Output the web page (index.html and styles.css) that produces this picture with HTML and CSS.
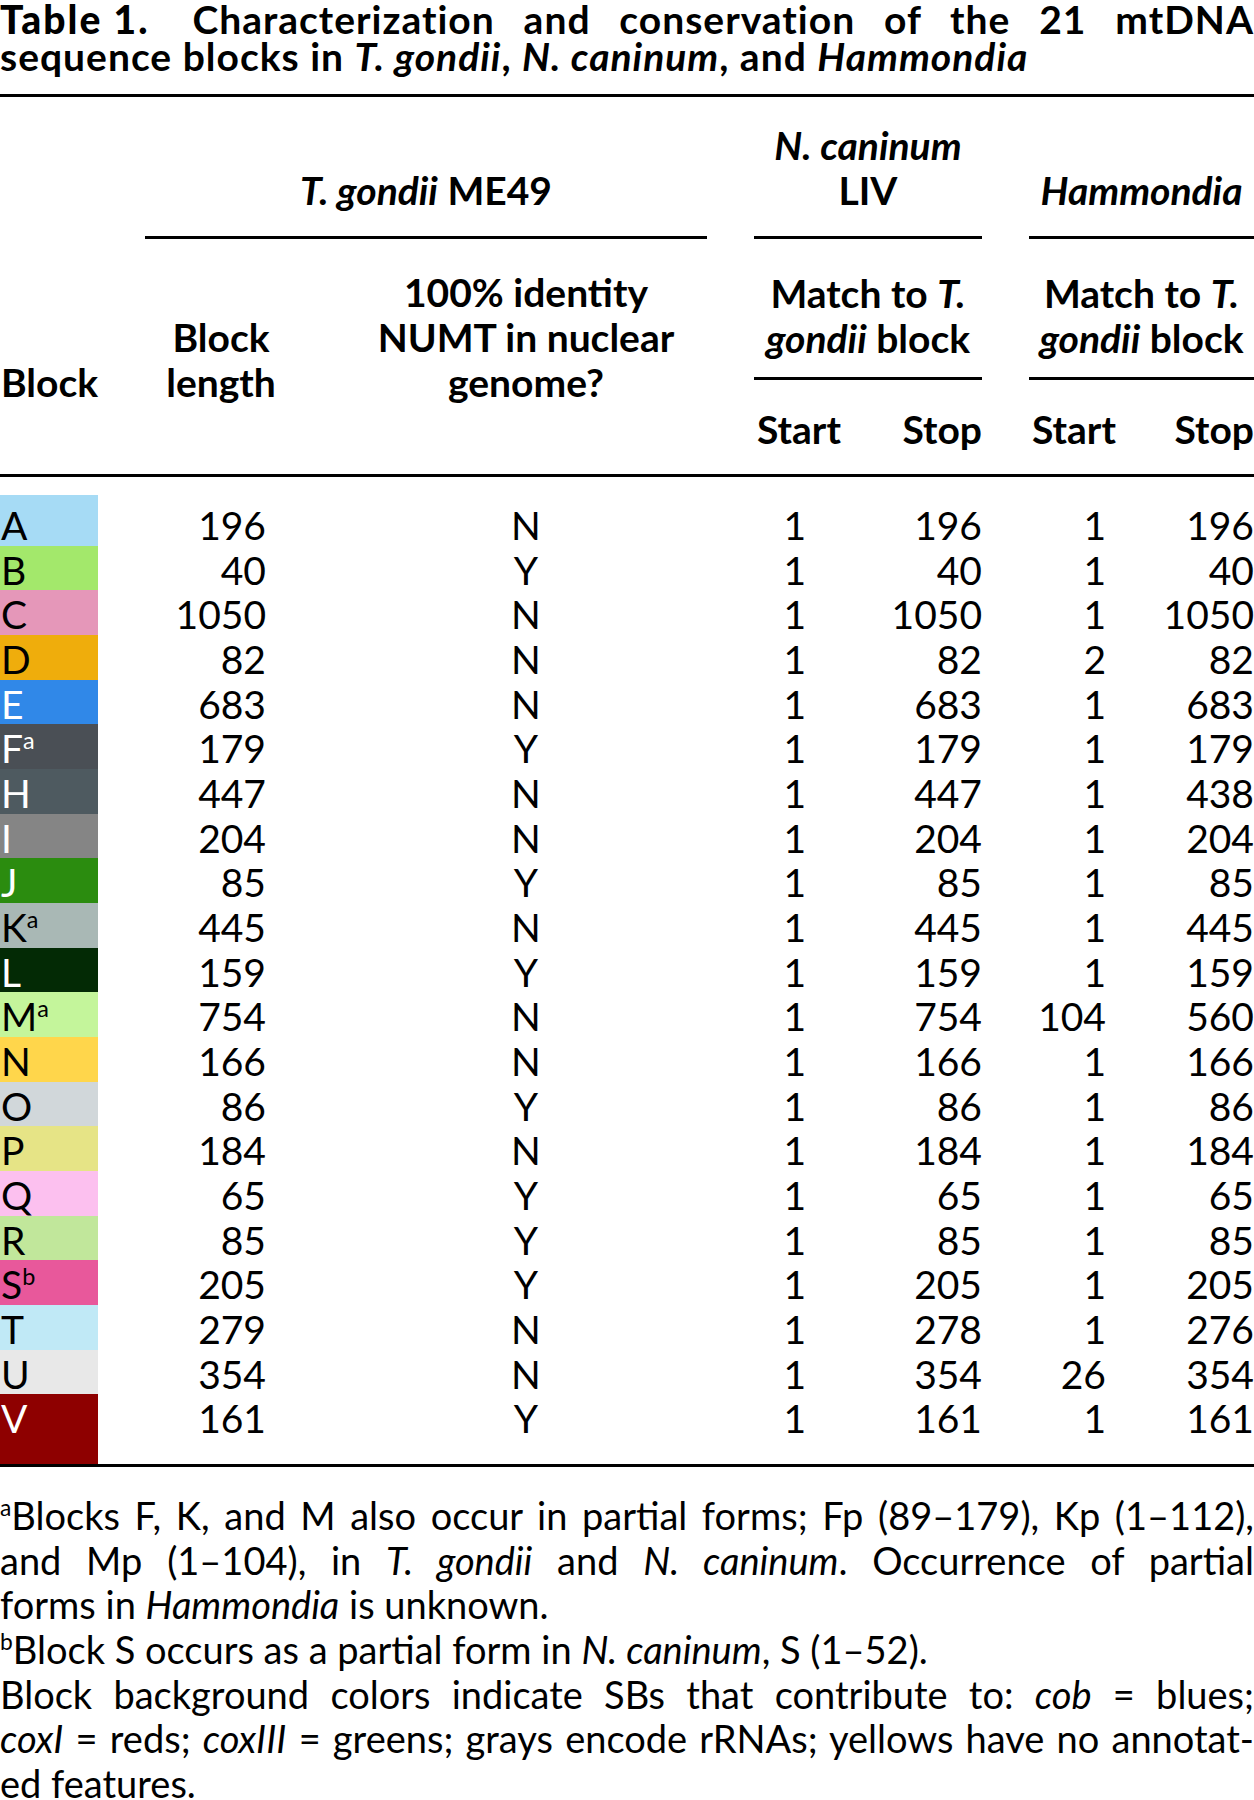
FILE: index.html
```html
<!DOCTYPE html>
<html lang="en">
<head>
<meta charset="utf-8">
<title>Table 1</title>
<link rel="stylesheet" href="styles.css">
</head>
<body>
<div class="page">
  <h1 class="title">
    <span class="t-line t-just"><span class="t-label">Table 1.</span> Characterization and conservation of the 21 mtDNA</span>
    <span class="t-line">sequence blocks in <i>T. gondii</i>, <i>N. caninum</i>, and <i>Hammondia</i></span>
  </h1>

  <div class="thead">
    <div class="grp g-tg"><i>T. gondii</i> ME49</div>
    <div class="grp g-nc"><i>N. caninum</i><br>LIV</div>
    <div class="grp g-hm"><i>Hammondia</i></div>

    <div class="hspan h-block">Block</div>
    <div class="hspan h-len">Block<br>length</div>
    <div class="hspan h-numt">100% identity<br>NUMT in nuclear<br>genome?</div>

    <div class="match m-nc">Match to <i>T.</i><br><i>gondii</i> block</div>
    <div class="match m-hm">Match to <i>T.</i><br><i>gondii</i> block</div>

    <div class="ss ss-l c5">Start</div>
    <div class="ss ss-r c6">Stop</div>
    <div class="ss ss-l c8">Start</div>
    <div class="ss ss-r c9">Stop</div>
  </div>

  <div class="tbody">
    <div class="row"><span class="blk bg-a">A</span><span class="len">196</span><span class="numt">N</span><span class="nstart">1</span><span class="nstop">196</span><span class="hstart">1</span><span class="hstop">196</span></div>
    <div class="row"><span class="blk bg-b">B</span><span class="len">40</span><span class="numt">Y</span><span class="nstart">1</span><span class="nstop">40</span><span class="hstart">1</span><span class="hstop">40</span></div>
    <div class="row"><span class="blk bg-c">C</span><span class="len">1050</span><span class="numt">N</span><span class="nstart">1</span><span class="nstop">1050</span><span class="hstart">1</span><span class="hstop">1050</span></div>
    <div class="row"><span class="blk bg-d">D</span><span class="len">82</span><span class="numt">N</span><span class="nstart">1</span><span class="nstop">82</span><span class="hstart">2</span><span class="hstop">82</span></div>
    <div class="row"><span class="blk bg-e light">E</span><span class="len">683</span><span class="numt">N</span><span class="nstart">1</span><span class="nstop">683</span><span class="hstart">1</span><span class="hstop">683</span></div>
    <div class="row"><span class="blk bg-f light">F<span class="sup">a</span></span><span class="len">179</span><span class="numt">Y</span><span class="nstart">1</span><span class="nstop">179</span><span class="hstart">1</span><span class="hstop">179</span></div>
    <div class="row"><span class="blk bg-h light">H</span><span class="len">447</span><span class="numt">N</span><span class="nstart">1</span><span class="nstop">447</span><span class="hstart">1</span><span class="hstop">438</span></div>
    <div class="row"><span class="blk bg-i light">I</span><span class="len">204</span><span class="numt">N</span><span class="nstart">1</span><span class="nstop">204</span><span class="hstart">1</span><span class="hstop">204</span></div>
    <div class="row"><span class="blk bg-j light">J</span><span class="len">85</span><span class="numt">Y</span><span class="nstart">1</span><span class="nstop">85</span><span class="hstart">1</span><span class="hstop">85</span></div>
    <div class="row"><span class="blk bg-k">K<span class="sup">a</span></span><span class="len">445</span><span class="numt">N</span><span class="nstart">1</span><span class="nstop">445</span><span class="hstart">1</span><span class="hstop">445</span></div>
    <div class="row"><span class="blk bg-l light">L</span><span class="len">159</span><span class="numt">Y</span><span class="nstart">1</span><span class="nstop">159</span><span class="hstart">1</span><span class="hstop">159</span></div>
    <div class="row"><span class="blk bg-m">M<span class="sup">a</span></span><span class="len">754</span><span class="numt">N</span><span class="nstart">1</span><span class="nstop">754</span><span class="hstart">104</span><span class="hstop">560</span></div>
    <div class="row"><span class="blk bg-n">N</span><span class="len">166</span><span class="numt">N</span><span class="nstart">1</span><span class="nstop">166</span><span class="hstart">1</span><span class="hstop">166</span></div>
    <div class="row"><span class="blk bg-o">O</span><span class="len">86</span><span class="numt">Y</span><span class="nstart">1</span><span class="nstop">86</span><span class="hstart">1</span><span class="hstop">86</span></div>
    <div class="row"><span class="blk bg-p">P</span><span class="len">184</span><span class="numt">N</span><span class="nstart">1</span><span class="nstop">184</span><span class="hstart">1</span><span class="hstop">184</span></div>
    <div class="row"><span class="blk bg-q">Q</span><span class="len">65</span><span class="numt">Y</span><span class="nstart">1</span><span class="nstop">65</span><span class="hstart">1</span><span class="hstop">65</span></div>
    <div class="row"><span class="blk bg-r">R</span><span class="len">85</span><span class="numt">Y</span><span class="nstart">1</span><span class="nstop">85</span><span class="hstart">1</span><span class="hstop">85</span></div>
    <div class="row"><span class="blk bg-s">S<span class="sup">b</span></span><span class="len">205</span><span class="numt">Y</span><span class="nstart">1</span><span class="nstop">205</span><span class="hstart">1</span><span class="hstop">205</span></div>
    <div class="row"><span class="blk bg-t">T</span><span class="len">279</span><span class="numt">N</span><span class="nstart">1</span><span class="nstop">278</span><span class="hstart">1</span><span class="hstop">276</span></div>
    <div class="row"><span class="blk bg-u">U</span><span class="len">354</span><span class="numt">N</span><span class="nstart">1</span><span class="nstop">354</span><span class="hstart">26</span><span class="hstop">354</span></div>
    <div class="row"><span class="blk bg-v light">V</span><span class="len">161</span><span class="numt">Y</span><span class="nstart">1</span><span class="nstop">161</span><span class="hstart">1</span><span class="hstop">161</span></div>
  </div>

  <div class="notes">
    <div class="n-line n-just"><span class="sup">a</span>Blocks F, K, and M also occur in partial forms; Fp (89–179), Kp (1–112),</div>
    <div class="n-line n-just">and Mp (1–104), in <i>T. gondii</i> and <i>N. caninum</i>. Occurrence of partial</div>
    <div class="n-line">forms in <i>Hammondia</i> is unknown.</div>
    <div class="n-line"><span class="sup">b</span>Block S occurs as a partial form in <i>N. caninum</i>, S (1–52).</div>
    <div class="n-line n-just">Block background colors indicate SBs that contribute to: <i>cob</i> = blues;</div>
    <div class="n-line n-just"><i>coxI</i> = reds; <i>coxIII</i> = greens; grays encode rRNAs; yellows have no annotat-</div>
    <div class="n-line">ed features.</div>
  </div>
</div>
</body>
</html>
```

FILE: styles.css
```css
html, body {
  margin: 0;
  padding: 0;
  background: #fff;
  overflow-x: hidden;
}

.page {
  width: 1254px;
  font-family: Lato, "Open Sans", "DejaVu Sans", sans-serif;
  color: #000;
}

i { font-style: italic; }

/* ---------- title ---------- */
.title {
  margin: 0;
  padding-top: 1px;
  padding-bottom: 19px;
  border-bottom: 3px solid #000;
  font-size: 39px;
  line-height: 37px;
  font-weight: 700;
  letter-spacing: 1px;
}
.t-line { display: block; white-space: nowrap; }
.t-just { text-align: justify; text-align-last: justify; }
.t-label {
  display: inline-block;
  font-weight: 900;
  letter-spacing: 2px;
  margin-right: 14px;
}

/* ---------- header ---------- */
.thead,
.row {
  display: grid;
  grid-template-columns: 145px 152px 410px 47px 114px 114px 47px 113px 112px;
}

.thead {
  border-bottom: 3px solid #000;
  font-size: 39px;
  line-height: 45px;
  font-weight: 700;
}

.grp {
  grid-row: 1;
  align-self: end;
  padding: 26px 0 23px;
  border-bottom: 3px solid #000;
  text-align: center;
  white-space: nowrap;
}
.g-tg { grid-column: 2 / 4; }
.g-nc { grid-column: 5 / 7; }
.g-hm { grid-column: 8 / 10; }

.hspan {
  grid-row: 2 / 4;
  align-self: end;
  padding-bottom: 69px;
  white-space: nowrap;
}
.h-block { grid-column: 1; padding-left: 1px; }
.h-len { grid-column: 2; text-align: center; }
.h-numt { grid-column: 3; text-align: center; padding-left: 48px; }

.match {
  grid-row: 2;
  padding: 32px 0 16px;
  border-bottom: 3px solid #000;
  text-align: center;
  white-space: nowrap;
}
.m-nc { grid-column: 5 / 7; }
.m-hm { grid-column: 8 / 10; }

.ss {
  grid-row: 3;
  padding: 27px 0 22px;
  white-space: nowrap;
}
.ss-l { text-align: left; padding-left: 3px; }
.ss-r { text-align: right; }
.c5 { grid-column: 5; }
.c6 { grid-column: 6; }
.c8 { grid-column: 8; }
.c9 { grid-column: 9; }

/* ---------- body ---------- */
.tbody {
  padding-top: 18px;
  border-bottom: 3px solid #000;
}

.row {
  font-size: 39px;
  line-height: 39.67px;
  font-weight: 400;
}
.row > span { padding-top: 5px; white-space: nowrap; }
.row:first-child > span { padding-top: 11px; }
.row:last-child > span { padding-bottom: 25px; }

.blk {
  grid-column: 1;
  width: 98px;
  padding-left: 1px;
  box-sizing: border-box;
}
.blk.light { color: #fff; }
.len { grid-column: 2; text-align: right; padding-right: 31px; }
.numt { grid-column: 3; text-align: center; padding-left: 48px; }
.nstart { grid-column: 5; text-align: right; padding-right: 62px; }
.nstop { grid-column: 6; text-align: right; }
.hstart { grid-column: 8; text-align: right; padding-right: 36px; }
.hstop { grid-column: 9; text-align: right; }

.sup {
  font-size: 0.6em;
  line-height: 0;
  vertical-align: 0.62em;
}

.bg-a { background: #a6dbf5; }
.bg-b { background: #a3e86b; }
.bg-c { background: #e597b9; }
.bg-d { background: #efad0c; }
.bg-e { background: #3088e8; }
.bg-f { background: #4a4f55; }
.bg-h { background: #4e5a60; }
.bg-i { background: #858585; }
.bg-j { background: #2b8c0f; }
.bg-k { background: #a9b8b5; }
.bg-l { background: #032a05; }
.bg-m { background: #c4f59b; }
.bg-n { background: #ffd64b; }
.bg-o { background: #d1d7da; }
.bg-p { background: #e6e486; }
.bg-q { background: #fcc0ef; }
.bg-r { background: #c1e79b; }
.bg-s { background: #e8589b; }
.bg-t { background: #c0e9f6; }
.bg-u { background: #e8e8e8; }
.bg-v { background: #8e0000; }

/* ---------- notes ---------- */
.notes {
  padding-top: 26px;
  font-size: 38px;
  line-height: 44.67px;
  font-weight: 400;
}
.n-line { white-space: nowrap; }
.n-just { text-align: justify; text-align-last: justify; }
```
